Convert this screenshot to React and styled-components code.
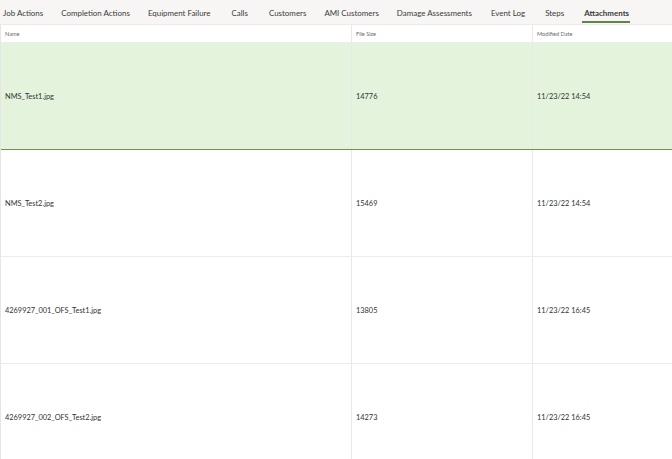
import React from 'react';
import styled, { createGlobalStyle } from 'styled-components';

const GlobalStyle = createGlobalStyle`
  html, body {
    margin: 0;
    padding: 0;
    background: #ffffff;
    font-family: Lato, "Liberation Sans", sans-serif;
    overflow: hidden;
  }
`;

const Page = styled.div`
  width: 672px;
  height: 459px;
  overflow: hidden;
  background: #fff;
`;

const TabBar = styled.div`
  height: 25px;
  display: flex;
  align-items: stretch;
  background: #f7f6f5;
  border-bottom: 1px solid #ebeae8;
  box-sizing: border-box;
  padding-left: 3px;
`;

const Tab = styled.div`
  position: relative;
  display: flex;
  align-items: center;
  height: 100%;
  padding-top: 1px;
  box-sizing: border-box;
  margin-right: ${p => p.$gap}px;
  font-size: 7.95px;
  color: #3a3a3a;
  font-weight: ${p => (p.$active ? 700 : 400)};
  white-space: nowrap;

  &::after {
    content: '';
    display: ${p => (p.$active ? 'block' : 'none')};
    position: absolute;
    left: -2px;
    right: -1px;
    bottom: 1px;
    height: 2px;
    background: #5f8549;
  }
`;

const Table = styled.div`
  border-left: 1px solid #e6e6e6;
`;

const Row = styled.div`
  display: grid;
  grid-template-columns: 351px 181px 1fr;
  height: ${p => p.$height}px;
  background: ${p => (p.$selected ? '#e3f3dc' : '#fff')};
  border-bottom: 1px solid ${p => (p.$selected ? '#6e9158' : '#ececec')};
  box-sizing: border-box;
`;

const Cell = styled.div`
  display: flex;
  align-items: center;
  padding-left: 4px;
  border-right: 1px solid #e8e8e8;
  font-size: ${p => (p.$head ? '5.6px' : '7.4px')};
  color: ${p => (p.$head ? '#6b6b6b' : '#333')};
  white-space: nowrap;
  &:last-child {
    border-right: none;
  }
`;

const tabs = [
  ['Job Actions', 18],
  ['Completion Actions', 18],
  ['Equipment Failure', 21],
  ['Calls', 21],
  ['Customers', 18],
  ['AMI Customers', 18],
  ['Damage Assessments', 19],
  ['Event Log', 20],
  ['Steps', 20],
  ['Attachments', 0],
];

const rows = [
  ['NMS_Test1.jpg', '14776', '11/23/22 14:54', true],
  ['NMS_Test2.jpg', '15469', '11/23/22 14:54', false],
  ['4269927_001_OFS_Test1.jpg', '13805', '11/23/22 16:45', false],
  ['4269927_002_OFS_Test2.jpg', '14273', '11/23/22 16:45', false],
];

export default function App() {
  return (
    <Page>
      <GlobalStyle />
      <TabBar>
        {tabs.map(([t, g]) => (
          <Tab key={t} $gap={g} $active={t === 'Attachments'}>
            {t}
          </Tab>
        ))}
      </TabBar>
      <Table>
        <Row $height={18}>
          <Cell $head>Name</Cell>
          <Cell $head>File Size</Cell>
          <Cell $head>Modified Date</Cell>
        </Row>
        {rows.map(([n, s, d, sel]) => (
          <Row key={n} $height={107} $selected={sel}>
            <Cell>{n}</Cell>
            <Cell>{s}</Cell>
            <Cell>{d}</Cell>
          </Row>
        ))}
      </Table>
    </Page>
  );
}
